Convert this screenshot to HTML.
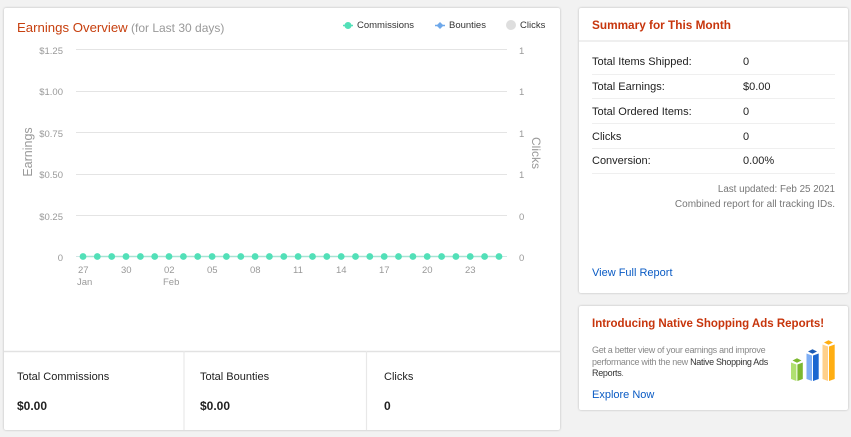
<!DOCTYPE html>
<html><head><meta charset="utf-8"><style>
html,body{margin:0;padding:0}
body{width:851px;height:437px;background:#f2f2f2;overflow:hidden;position:relative;font-family:"Liberation Sans",sans-serif;color:#111}
.card{position:absolute;background:#fff;border-radius:2px;box-shadow:0 0 2px rgba(0,0,0,.25)}
.t{position:absolute;white-space:nowrap;line-height:14px}
.g{color:#999;font-size:9.500px}
.l{font-size:11px;color:#222}
.sep{position:absolute;left:592px;width:243px;height:1px;background:#efefef}
.h{font-weight:bold;color:#c7350c;font-size:11.800px}
.lg{font-size:9.500px;color:#333}
a{color:#0a5bc4;text-decoration:none}
</style></head><body>
<div class="card" style="left:4px;top:8px;width:556px;height:422px"></div>
<div class="card" style="left:579px;top:8px;width:269px;height:285px"></div>
<div class="card" style="left:579px;top:306px;width:269px;height:104px"></div>

<div class="t" style="left:17px;top:20px;font-size:13.200px;line-height:16px;color:#c7400f">Earnings Overview</div>
<div class="t" style="left:131px;top:20px;font-size:12px;line-height:16px;color:#999">(for Last 30 days)</div>

<svg style="position:absolute;left:0;top:0" width="851" height="437">
<g stroke="#e4e4e4" stroke-width="1">
<line x1="76" x2="507" y1="49.5" y2="49.5"/><line x1="76" x2="507" y1="91.5" y2="91.5"/><line x1="76" x2="507" y1="132.5" y2="132.5"/><line x1="76" x2="507" y1="174.5" y2="174.5"/><line x1="76" x2="507" y1="215.5" y2="215.5"/>
<line x1="76" x2="507" y1="256.5" y2="256.5" stroke="#cfe5e5"/>
</g>
<line x1="83" x2="499" y1="256.5" y2="256.5" stroke="#a5e3d3" stroke-width="1.5"/>
<g fill="#52e0b8">
<circle cx="83" cy="256.5" r="3.4"/><circle cx="97.3" cy="256.5" r="3.4"/><circle cx="111.7" cy="256.5" r="3.4"/><circle cx="126" cy="256.5" r="3.4"/><circle cx="140.4" cy="256.5" r="3.4"/><circle cx="154.7" cy="256.5" r="3.4"/><circle cx="169" cy="256.5" r="3.4"/><circle cx="183.4" cy="256.5" r="3.4"/><circle cx="197.7" cy="256.5" r="3.4"/><circle cx="212.1" cy="256.5" r="3.4"/><circle cx="226.4" cy="256.5" r="3.4"/><circle cx="240.8" cy="256.5" r="3.4"/><circle cx="255.1" cy="256.5" r="3.4"/><circle cx="269.4" cy="256.5" r="3.4"/><circle cx="283.8" cy="256.5" r="3.4"/><circle cx="298.1" cy="256.5" r="3.4"/><circle cx="312.5" cy="256.5" r="3.4"/><circle cx="326.8" cy="256.5" r="3.4"/><circle cx="341.2" cy="256.5" r="3.4"/><circle cx="355.5" cy="256.5" r="3.4"/><circle cx="369.8" cy="256.5" r="3.4"/><circle cx="384.2" cy="256.5" r="3.4"/><circle cx="398.5" cy="256.5" r="3.4"/><circle cx="412.9" cy="256.5" r="3.4"/><circle cx="427.2" cy="256.5" r="3.4"/><circle cx="441.6" cy="256.5" r="3.4"/><circle cx="455.9" cy="256.5" r="3.4"/><circle cx="470.2" cy="256.5" r="3.4"/><circle cx="484.6" cy="256.5" r="3.4"/><circle cx="499" cy="256.5" r="3.4"/>
</g>
<line x1="343" x2="353" y1="25.5" y2="25.5" stroke="#52e0b8" stroke-width="1.5"/><circle cx="348" cy="25.5" r="3.5" fill="#52e0b8"/>
<line x1="435" x2="445" y1="25.5" y2="25.5" stroke="#6ea8ea" stroke-width="1.5"/><path d="M440 22l3.500 3.500-3.500 3.500-3.500-3.500z" fill="#6ea8ea"/>
<circle cx="511" cy="25" r="5" fill="#dedede"/>
<line x1="4" x2="560" y1="351.5" y2="351.5" stroke="#e2e2e2" stroke-width="1.5"/>
<line x1="184" x2="184" y1="351" y2="430" stroke="#e8e8e8" stroke-width="1.2"/>
<line x1="366.5" x2="366.5" y1="351" y2="430" stroke="#e8e8e8" stroke-width="1.2"/>
<line x1="579" x2="848" y1="41" y2="41" stroke="#eaeaea" stroke-width="1.5"/>

<path d="M791 362.500L796.400 364.500V381L791 379z" fill="#b0e070"/><path d="M797.400 364.500L802.800 362.500V379L797.400 381z" fill="#7cb82f"/><path d="M792.500 360.500L797 358.300 801.500 360.500 797 362.700z" fill="#7cb82f"/>
<path d="M806.500 353.500L812 355.500V381L806.500 379z" fill="#7eaef5"/><path d="M813 355.500L818.700 353.500V379L813 381z" fill="#1a66d0"/><path d="M808 351.500L812.500 349.300 817 351.500 812.500 353.700z" fill="#1a5ab5"/>
<path d="M822.500 344.500L828 346.500V381L822.500 379z" fill="#ffd08a"/><path d="M829 346.500L834.700 344.500V379L829 381z" fill="#ffae12"/><path d="M824 342.500L828.500 340.300 833 342.500 828.500 344.700z" fill="#ffae12"/>
</svg>

<div class="t lg" style="left:357px;top:19px">Commissions</div>
<div class="t lg" style="left:449px;top:19px">Bounties</div>
<div class="t lg" style="left:520px;top:19px">Clicks</div>

<div class="t g" style="right:788px;top:45px">$1.25</div>
<div class="t g" style="right:788px;top:86px">$1.00</div>
<div class="t g" style="right:788px;top:128px">$0.75</div>
<div class="t g" style="right:788px;top:169px">$0.50</div>
<div class="t g" style="right:788px;top:211px">$0.25</div>
<div class="t g" style="right:788px;top:252px">0</div>
<div class="t g" style="left:519px;top:45px">1</div>
<div class="t g" style="left:519px;top:86px">1</div>
<div class="t g" style="left:519px;top:128px">1</div>
<div class="t g" style="left:519px;top:169px">1</div>
<div class="t g" style="left:519px;top:211px">0</div>
<div class="t g" style="left:519px;top:252px">0</div>

<div class="t" style="left:28px;top:152px;font-size:12.500px;color:#999;transform:translate(-50%,-50%) rotate(-90deg)">Earnings</div>
<div class="t" style="left:536px;top:153px;font-size:12px;color:#999;transform:translate(-50%,-50%) rotate(90deg)">Clicks</div>

<div class="t g" style="left:78px;top:264px">27</div><div class="t g" style="left:121px;top:264px">30</div><div class="t g" style="left:164px;top:264px">02</div><div class="t g" style="left:207px;top:264px">05</div><div class="t g" style="left:250px;top:264px">08</div><div class="t g" style="left:293px;top:264px">11</div><div class="t g" style="left:336px;top:264px">14</div><div class="t g" style="left:379px;top:264px">17</div><div class="t g" style="left:422px;top:264px">20</div><div class="t g" style="left:465px;top:264px">23</div>
<div class="t g" style="left:77px;top:276px">Jan</div><div class="t g" style="left:163px;top:276px">Feb</div>

<div class="t l" style="left:17px;top:370px">Total Commissions</div>
<div class="t l" style="left:200px;top:370px">Total Bounties</div>
<div class="t l" style="left:384px;top:370px">Clicks</div>
<div class="t" style="left:17px;top:399px;font-size:12px;font-weight:bold;color:#222">$0.00</div>
<div class="t" style="left:200px;top:399px;font-size:12px;font-weight:bold;color:#222">$0.00</div>
<div class="t" style="left:384px;top:399px;font-size:12px;font-weight:bold;color:#222">0</div>

<div class="t h" style="left:592px;top:18px">Summary for This Month</div>
<div class="t l" style="left:592px;top:55px">Total Items Shipped:</div><div class="t l" style="left:743px;top:55px">0</div>
<div class="t l" style="left:592px;top:80px">Total Earnings:</div><div class="t l" style="left:743px;top:80px">$0.00</div>
<div class="t l" style="left:592px;top:105px">Total Ordered Items:</div><div class="t l" style="left:743px;top:105px">0</div>
<div class="t l" style="left:592px;top:130px">Clicks</div><div class="t l" style="left:743px;top:130px">0</div>
<div class="t l" style="left:592px;top:154px">Conversion:</div><div class="t l" style="left:743px;top:154px">0.00%</div>
<div class="sep" style="top:74px"></div><div class="sep" style="top:98px"></div><div class="sep" style="top:123px"></div><div class="sep" style="top:148px"></div><div class="sep" style="top:173px"></div>
<div class="t" style="right:16px;top:183px;font-size:9.800px;color:#777">Last updated: Feb 25 2021</div>
<div class="t" style="right:16px;top:198px;font-size:10px;color:#777">Combined report for all tracking IDs.</div>
<a class="t" style="left:592px;top:266px;font-size:11px">View Full Report</a>

<div class="t h" style="left:592px;top:317px;font-size:11.500px">Introducing Native Shopping Ads Reports!</div>
<div class="t" style="left:592px;top:345px;font-size:9px;line-height:11.700px;color:#888;letter-spacing:-.3px">Get a better view of your earnings and improve<br>performance with the new <span style="color:#333">Native Shopping Ads</span><br><span style="color:#333">Reports</span>.</div>
<a class="t" style="left:592px;top:388px;font-size:11px">Explore Now</a>
</body></html>
